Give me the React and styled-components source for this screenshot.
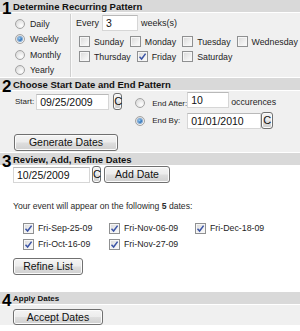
import styled, { createGlobalStyle } from "styled-components";

const GlobalStyle = createGlobalStyle`
  body {
    margin: 0;
    background: #fff;
    font-family: "Liberation Sans", Arial, sans-serif;
    color: #1e1e1e;
  }
`;

const Panel = styled.div`
  width: 300px;
  display: flex;
  flex-direction: column;
`;

const Section = styled.section`
  margin-bottom: 1px;
`;

const Header = styled.div`
  display: flex;
  align-items: center;
  height: 12px;
  background: #d9d9d9;
  margin-bottom: 1px;
`;

const Num = styled.span`
  align-self: flex-start;
  width: 10px;
  margin: 0 1px -5px 2px;
  font-size: 17px;
  font-weight: bold;
  line-height: 17px;
  color: #000;
`;

const Title = styled.span`
  font-size: ${(p) => p.$size || 9.5}px;
  font-weight: bold;
  color: #111;
`;

const Body = styled.div`
  box-sizing: border-box;
  height: ${(p) => p.$h}px;
  background: ${(p) => (p.$white ? "#fff" : "#f0f0f0")};
  padding: ${(p) => p.$pad || "0"};
`;

const Row = styled.div`
  display: flex;
  align-items: ${(p) => p.$align || "center"};
  gap: ${(p) => p.$gap || 0}px;
`;

/* section 1 */
const PatternBody = styled(Body)`
  display: flex;
`;

const FreqList = styled.div`
  width: 71px;
  box-sizing: border-box;
  padding: 2px 0 0 15px;
  margin-top: 1px;
  border-right: 1px solid #cfcfcf;
  box-shadow: 1px 0 0 #fafafa;
`;

const FreqItem = styled.label`
  display: flex;
  align-items: center;
  height: 15.5px;
  gap: 5px;
  font-size: 8.8px;
`;

const WeeklyPane = styled.div`
  flex: 1;
  padding: 2px 0 0 5px;
`;

const Text = styled.span`
  font-size: ${(p) => p.$size || 8.8}px;
  color: ${(p) => p.$color || "#1e1e1e"};
  margin: ${(p) => p.$m || "0"};
  white-space: nowrap;
`;

const Days = styled.div`
  display: flex;
  flex-wrap: wrap;
  width: 220px;
  margin: 5px 0 0 3px;
  row-gap: 4px;
  column-gap: 6px;
`;

const Check = styled.label`
  display: flex;
  align-items: center;
  gap: 4px;
  height: 11px;
  font-size: 8.8px;
  white-space: nowrap;
`;

const Box = styled.span`
  box-sizing: border-box;
  width: 11px;
  height: 11px;
  flex-shrink: 0;
  display: inline-flex;
  align-items: center;
  justify-content: center;
  border: 1px solid #8f9091;
  background: linear-gradient(135deg, #d9d9d9 0%, #f3f3f3 70%, #fbfbfb 100%);
  box-shadow: inset 0 0 0 1px #f6f6f6;
`;

const RadioDot = styled.span`
  box-sizing: border-box;
  width: 10px;
  height: 10px;
  flex-shrink: 0;
  border-radius: 50%;
  display: inline-flex;
  align-items: center;
  justify-content: center;
  border: 1px solid #a3a3a3;
  background: radial-gradient(circle at 65% 70%, #ffffff 0%, #e4e4e4 60%, #cfcfcf 100%);
  &::after {
    content: "";
    display: ${(p) => (p.$on ? "block" : "none")};
    width: 4px;
    height: 4px;
    border-radius: 50%;
    background: radial-gradient(circle at 35% 35%, #9cd0f6 0%, #2a6fb8 60%, #174d8c 100%);
    box-shadow: 0 0 0 1px #7fa9d4;
  }
`;

const Input = styled.input`
  box-sizing: border-box;
  width: ${(p) => p.$w}px;
  height: 16px;
  margin: 0;
  padding: 0 0 0 3px;
  border: 1px solid #d6d6d6;
  border-top-color: #b9b9b9;
  background: #fff;
  font-family: inherit;
  font-size: 10.5px;
  color: #111;
  outline: none;
`;

const Button = styled.button`
  box-sizing: border-box;
  width: ${(p) => p.$w}px;
  height: ${(p) => p.$h || 17}px;
  margin: ${(p) => p.$m || "0"};
  padding: 0;
  border: 1px solid #707070;
  border-radius: 3px;
  background: linear-gradient(#f4f4f4 0%, #ececec 48%, #dedede 52%, #d0d0d0 100%);
  box-shadow: inset 0 0 0 1px #fbfbfb;
  font-family: inherit;
  font-size: ${(p) => p.$fs || 10.5}px;
  color: #111;
  line-height: 1;
`;

/* section 2 */
const RangeTop = styled.div`
  display: flex;
`;

const StartRow = styled(Row)`
  padding: 2px 0 0 15px;
  align-self: flex-start;
`;

const EndList = styled.div`
  display: flex;
  flex-direction: column;
  gap: 4px;
  margin: 1px 0 0 13px;
`;

const EndLabel = styled.span`
  width: 35px;
  margin-left: 7px;
  font-size: 8px;
  white-space: nowrap;
`;

const ButtonRow = styled.div`
  display: flex;
  padding: ${(p) => p.$pad || "0"};
`;

/* section 3 */
const DateGrid = styled.div`
  display: grid;
  grid-auto-flow: column;
  grid-template-rows: repeat(2, 16px);
  grid-template-columns: repeat(3, 86px);
  align-items: center;
  margin: 9px 0 0 10px;
`;

const Tick = () => (
  <svg width="9" height="9" viewBox="0 0 9 9">
    <path d="M1.5 4.8 L3.6 7 L7.6 1.6" fill="none" stroke="#3b54a6" strokeWidth="1.5" />
  </svg>
);

const CheckItem = ({ label, on }) => (
  <Check>
    <Box>{on && <Tick />}</Box>
    {label}
  </Check>
);

const SectionHead = ({ n, children, size }) => (
  <Header>
    <Num>{n}</Num>
    <Title $size={size}>{children}</Title>
  </Header>
);

const days = [
  ["Sunday", false],
  ["Monday", false],
  ["Tuesday", false],
  ["Wednesday", false],
  ["Thursday", false],
  ["Friday", true],
  ["Saturday", false],
];

const dates = ["Fri-Sep-25-09", "Fri-Oct-16-09", "Fri-Nov-06-09", "Fri-Nov-27-09", "Fri-Dec-18-09"];

export default function App() {
  return (
    <>
      <GlobalStyle />
      <Panel>
        <Section>
          <SectionHead n="1">Determine Recurring Pattern</SectionHead>
          <PatternBody $h={64}>
            <FreqList>
              {["Daily", "Weekly", "Monthly", "Yearly"].map((f) => (
                <FreqItem key={f}>
                  <RadioDot $on={f === "Weekly"} />
                  {f}
                </FreqItem>
              ))}
            </FreqList>
            <WeeklyPane>
              <Row $gap={3}>
                <Text $size={9}>Every</Text>
                <Input $w={36} defaultValue="3" />
                <Text $size={9}>weeks(s)</Text>
              </Row>
              <Days>
                {days.map(([d, on]) => (
                  <CheckItem key={d} label={d} on={on} />
                ))}
              </Days>
            </WeeklyPane>
          </PatternBody>
        </Section>

        <Section>
          <SectionHead n="2">Choose Start Date and End Pattern</SectionHead>
          <Body $h={61}>
            <RangeTop>
              <StartRow>
                <Text $size={8} $m="0 2px 0 0">Start:</Text>
                <Input $w={73} defaultValue="09/25/2009" />
                <Button $w={9} $fs={11} $m="0 0 0 4px">C</Button>
              </StartRow>
              <EndList>
                <Row $align="flex-end">
                  <Row>
                    <RadioDot />
                    <EndLabel>End After:</EndLabel>
                  </Row>
                  <Input $w={42} defaultValue="10" />
                  <Text $m="0 0 1px 2px">occurences</Text>
                </Row>
                <Row>
                  <RadioDot $on />
                  <EndLabel>End By:</EndLabel>
                  <Input $w={74} defaultValue="01/01/2010" />
                  <Button $w={12} $fs={11}>C</Button>
                </Row>
              </EndList>
            </RangeTop>
            <ButtonRow $pad="5px 0 0 14px">
              <Button $w={104}>Generate Dates</Button>
            </ButtonRow>
          </Body>
        </Section>

        <Section>
          <SectionHead n="3">Review, Add, Refine Dates</SectionHead>
          <Body $h={125} $white $pad="0 0 0 13px">
            <Row $gap={2}>
              <Input $w={77} defaultValue="10/25/2009" />
              <Button $w={9} $fs={11}>C</Button>
              <Button $w={66} $m="0 0 0 1px">Add Date</Button>
            </Row>
            <Text as="div" $size={8.6} $color="#2a2a2a" $m="18px 0 0 0">
              Your event will appear on the following <b>5</b> dates:
            </Text>
            <DateGrid>
              {dates.map((d) => (
                <CheckItem key={d} label={d} on />
              ))}
            </DateGrid>
            <ButtonRow $pad="6px 0 0 0">
              <Button $w={70}>Refine List</Button>
            </ButtonRow>
          </Body>
        </Section>

        <Section>
          <SectionHead n="4" size={8}>Apply Dates</SectionHead>
          <Body $h={20} $pad="2px 0 0 13px">
            <Button $w={90} $h={16}>Accept Dates</Button>
          </Body>
        </Section>
      </Panel>
    </>
  );
}
